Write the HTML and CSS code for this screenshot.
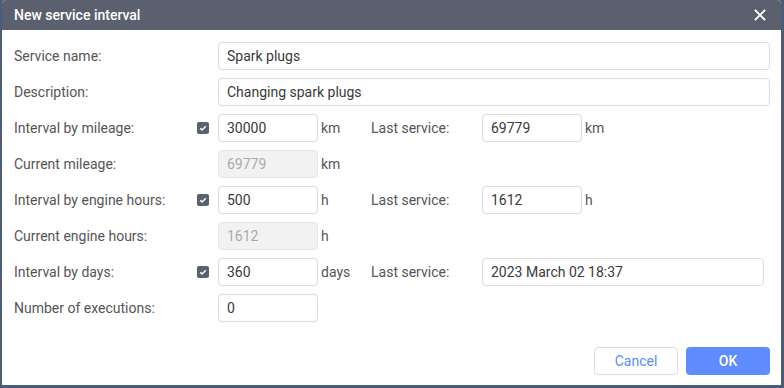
FILE: index.html
```html
<!DOCTYPE html>
<html>
<head>
<meta charset="utf-8">
<link rel="stylesheet" href="styles.css">
</head>
<body>
<div class="dialog">
  <div class="header">
    <span class="title">New service interval</span>
    <svg class="close" width="12" height="12" viewBox="0 0 12 12"><path d="M1.5 1.5L10.5 10.5M10.5 1.5L1.5 10.5" stroke="#fff" stroke-width="1.8" stroke-linecap="square"/></svg>
  </div>
  <div class="content">
    <div class="row">
      <span class="label">Service name:</span>
      <span class="spacer"></span>
      <div class="input wide">Spark plugs</div>
    </div>
    <div class="row">
      <span class="label">Description:</span>
      <span class="spacer"></span>
      <div class="input wide">Changing spark plugs</div>
    </div>
    <div class="row">
      <span class="label">Interval by mileage:</span>
      <span class="check"><svg width="12" height="12" viewBox="0 0 12 12"><path d="M3.2 6.2L5.1 8L8.8 4.2" stroke="#fff" stroke-width="1.5" fill="none"/></svg></span>
      <div class="input">30000</div>
      <span class="unit">km</span>
      <span class="label2">Last service:</span>
      <div class="input">69779</div>
      <span class="unit">km</span>
    </div>
    <div class="row">
      <span class="label">Current mileage:</span>
      <span class="spacer"></span>
      <div class="input disabled">69779</div>
      <span class="unit">km</span>
    </div>
    <div class="row">
      <span class="label">Interval by engine hours:</span>
      <span class="check"><svg width="12" height="12" viewBox="0 0 12 12"><path d="M3.2 6.2L5.1 8L8.8 4.2" stroke="#fff" stroke-width="1.5" fill="none"/></svg></span>
      <div class="input">500</div>
      <span class="unit">h</span>
      <span class="label2">Last service:</span>
      <div class="input">1612</div>
      <span class="unit">h</span>
    </div>
    <div class="row">
      <span class="label">Current engine hours:</span>
      <span class="spacer"></span>
      <div class="input disabled">1612</div>
      <span class="unit">h</span>
    </div>
    <div class="row">
      <span class="label">Interval by days:</span>
      <span class="check"><svg width="12" height="12" viewBox="0 0 12 12"><path d="M3.2 6.2L5.1 8L8.8 4.2" stroke="#fff" stroke-width="1.5" fill="none"/></svg></span>
      <div class="input">360</div>
      <span class="unit">days</span>
      <span class="label2">Last service:</span>
      <div class="input date">2023 March 02 18:37</div>
    </div>
    <div class="row">
      <span class="label">Number of executions:</span>
      <span class="spacer"></span>
      <div class="input">0</div>
    </div>
    <div class="buttons">
      <button class="btn cancel">Cancel</button>
      <button class="btn ok">OK</button>
    </div>
  </div>
</div>
</body>
</html>
```

FILE: styles.css
```css
html, body {
  margin: 0;
  padding: 0;
}
body {
  background: #4c5c77;
  width: 784px;
  height: 388px;
  overflow: hidden;
  font-family: Roboto, "Liberation Sans", sans-serif;
  font-size: 14px;
  color: #555;
}
.dialog {
  margin: 0 3px 0 2px;
  height: 385px;
  background: #fff;
  border-radius: 4px 4px 0 0;
  display: flex;
  flex-direction: column;
  overflow: hidden;
}
.header {
  height: 30px;
  background: #5b606e;
  display: flex;
  align-items: center;
  justify-content: space-between;
  padding: 0 15px 0 12px;
  flex-shrink: 0;
}
.title {
  color: #fff;
  font-weight: 500;
  font-size: 14px;
}
.close {
  display: block;
}
.content {
  padding: 12px 11px 12px 12px;
  display: flex;
  flex-direction: column;
  gap: 8px;
  flex: 1;
}
.row {
  display: flex;
  align-items: center;
  height: 28px;
}
.label {
  width: 183px;
  flex-shrink: 0;
}
.spacer {
  width: 21px;
  flex-shrink: 0;
}
.check {
  width: 12px;
  height: 12px;
  margin-right: 9px;
  background: #5b606e;
  border-radius: 2px;
  flex-shrink: 0;
  display: flex;
}
.input {
  box-sizing: border-box;
  width: 100px;
  height: 28px;
  border: 1px solid #dcdcdc;
  border-radius: 4px;
  padding: 0 8px;
  display: flex;
  align-items: center;
  color: #3a3a3a;
  flex-shrink: 0;
}
.input.wide {
  flex: 1;
}
.input.date {
  width: 282px;
}
.input.disabled {
  background: #f2f2f2;
  color: #aaa;
  border-color: #e6e6e6;
}
.unit {
  width: 50px;
  padding-left: 3px;
  flex-shrink: 0;
}
.label2 {
  width: 111px;
  flex-shrink: 0;
}
.buttons {
  margin-top: 17px;
  display: flex;
  justify-content: flex-end;
  gap: 8px;
}
.btn {
  width: 84px;
  height: 28px;
  border-radius: 4px;
  font-family: Roboto, "Liberation Sans", sans-serif;
  font-size: 14px;
  cursor: pointer;
}
.cancel {
  background: #fff;
  border: 1px solid #dcdcdc;
  color: #5b8cff;
}
.ok {
  background: #5f8dff;
  border: none;
  color: #fff;
  font-weight: 500;
}
```
